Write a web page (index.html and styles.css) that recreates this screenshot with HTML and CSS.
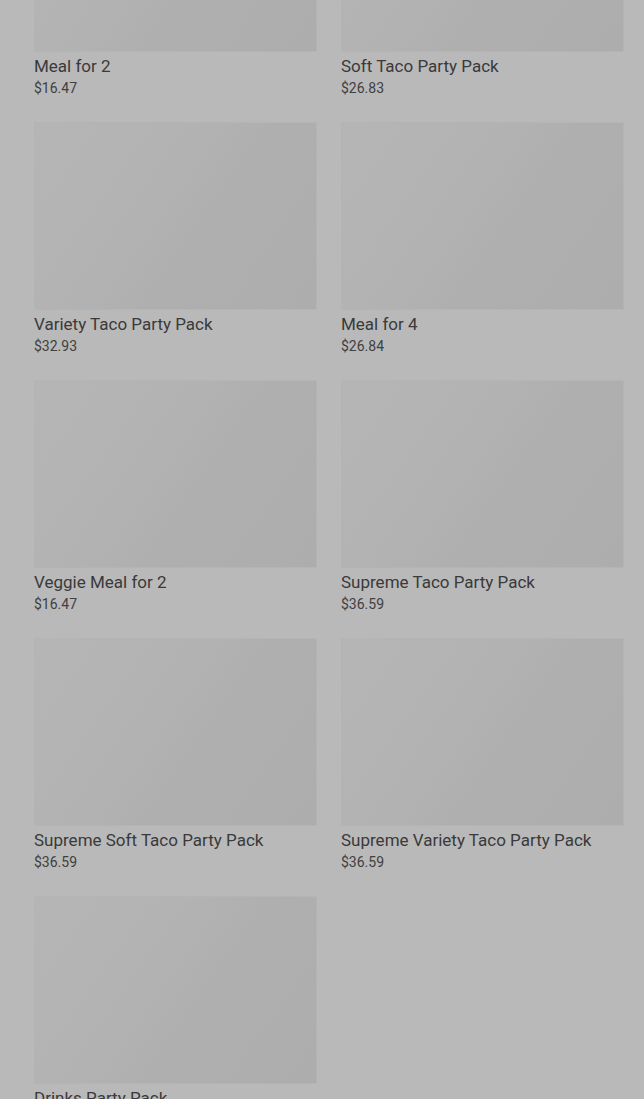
FILE: index.html
```html
<!DOCTYPE html>
<html lang="en">
<head>
    <meta charset="UTF-8">
    <title>Party Packs</title>
    <link rel="stylesheet" href="styles.css">
</head>
<body>
    <div class="products">
        <div class="product">
            <div class="thumb"></div>
            <p class="name">Meal for 2</p>
            <p class="price">$16.47</p>
        </div>
        <div class="product">
            <div class="thumb"></div>
            <p class="name">Soft Taco Party Pack</p>
            <p class="price">$26.83</p>
        </div>
        <div class="product">
            <div class="thumb"></div>
            <p class="name">Variety Taco Party Pack</p>
            <p class="price">$32.93</p>
        </div>
        <div class="product">
            <div class="thumb"></div>
            <p class="name">Meal for 4</p>
            <p class="price">$26.84</p>
        </div>
        <div class="product">
            <div class="thumb"></div>
            <p class="name">Veggie Meal for 2</p>
            <p class="price">$16.47</p>
        </div>
        <div class="product">
            <div class="thumb"></div>
            <p class="name">Supreme Taco Party Pack</p>
            <p class="price">$36.59</p>
        </div>
        <div class="product">
            <div class="thumb"></div>
            <p class="name">Supreme Soft Taco Party Pack</p>
            <p class="price">$36.59</p>
        </div>
        <div class="product">
            <div class="thumb"></div>
            <p class="name">Supreme Variety Taco Party Pack</p>
            <p class="price">$36.59</p>
        </div>
        <div class="product">
            <div class="thumb"></div>
            <p class="name">Drinks Party Pack</p>
            <p class="price">$24.99</p>
        </div>
    </div>
</body>
</html>
```

FILE: styles.css
```css
html, body {
    height: 100%;
    overflow: hidden;
}

body {
    margin: 0;
    padding: 0;
    background-color: #b9b9b9;
    font-family: Roboto, "Liberation Sans", Arial, sans-serif;
    color: #3a3a3a;
}

.products {
    display: grid;
    grid-template-columns: 283px 283px;
    column-gap: 24px;
    row-gap: 24px;
    padding: 0 20px 0 34px;
    margin-top: -136px;
}

.thumb {
    height: 186px;
    border: 1px solid #b4b4b4;
    background: linear-gradient(125deg, #b5b5b5 0%, #b3b3b3 35%, #afafaf 60%, #adadad 100%);
}

.name {
    margin: 2px 0 0;
    font-size: 17px;
    line-height: 24px;
    color: #3a3a3a;
}

.price {
    margin: 0;
    font-size: 14px;
    line-height: 20px;
    color: #404040;
}
```
